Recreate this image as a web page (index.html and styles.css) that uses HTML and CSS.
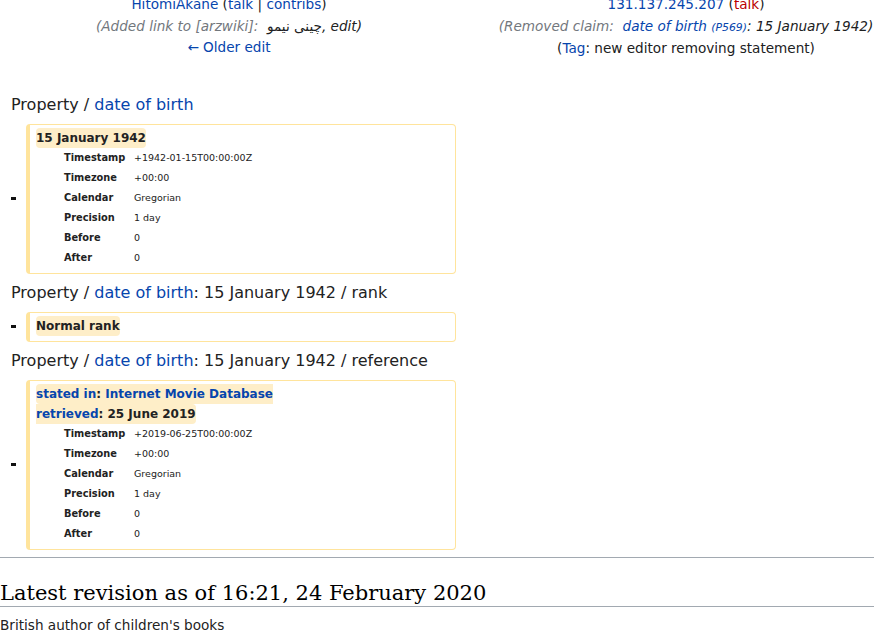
FILE: index.html
```html
<!DOCTYPE html>
<html lang="en">
<head>
<meta charset="utf-8">
<title>Diff</title>
<link rel="stylesheet" href="styles.css">
</head>
<body>
<div class="page">
  <div class="diff">
    <div class="diff-header">
      <div class="diff-title">
        <div class="hline"><a class="link" href="#">HitomiAkane</a> (<a class="link" href="#">talk</a> | <a class="link" href="#">contribs</a>)</div>
        <div class="hline comment"><span class="auto">(Added link to [arzwiki]:&nbsp; </span><span class="ar" dir="rtl">چینی نیمو</span>, edit)</div>
        <div class="hline"><a class="link" href="#">← Older edit</a></div>
      </div>
      <div class="diff-title">
        <div class="hline"><a class="link" href="#">131.137.245.207</a> (<a class="new" href="#">talk</a>)</div>
        <div class="hline comment"><span class="auto">(Removed claim:&nbsp; </span><a class="link" href="#">date of birth <span class="pid">(P569)</span></a>: 15 January 1942)</div>
        <div class="hline">(<a class="link" href="#">Tag</a>: new editor removing statement)</div>
      </div>
    </div>

    <div class="diff-body">
      <div class="lineno">Property / <a class="link" href="#">date of birth</a></div>
      <div class="marker"><span class="minus"></span></div>
      <div class="deleted">
        <span class="chg">15 January 1942</span>
        <table class="details">
          <tr><th>Timestamp</th><td>+1942-01-15T00:00:00Z</td></tr>
          <tr><th>Timezone</th><td>+00:00</td></tr>
          <tr><th>Calendar</th><td>Gregorian</td></tr>
          <tr><th>Precision</th><td>1 day</td></tr>
          <tr><th>Before</th><td>0</td></tr>
          <tr><th>After</th><td>0</td></tr>
        </table>
      </div>

      <div class="lineno">Property / <a class="link" href="#">date of birth</a>: 15 January 1942 / rank</div>
      <div class="marker"><span class="minus"></span></div>
      <div class="deleted">
        <span class="chg">Normal rank</span>
      </div>

      <div class="lineno">Property / <a class="link" href="#">date of birth</a>: 15 January 1942 / reference</div>
      <div class="marker"><span class="minus"></span></div>
      <div class="deleted">
        <span class="chg"><a class="link" href="#">stated in</a>: <a class="link" href="#">Internet Movie Database</a><br><a class="link" href="#">retrieved</a>: 25 June 2019</span>
        <table class="details">
          <tr><th>Timestamp</th><td>+2019-06-25T00:00:00Z</td></tr>
          <tr><th>Timezone</th><td>+00:00</td></tr>
          <tr><th>Calendar</th><td>Gregorian</td></tr>
          <tr><th>Precision</th><td>1 day</td></tr>
          <tr><th>Before</th><td>0</td></tr>
          <tr><th>After</th><td>0</td></tr>
        </table>
      </div>
    </div>
  </div>

  <hr class="rule">
  <h2 class="revision">Latest revision as of 16:21, 24 February 2020</h2>
  <p class="desc">British author of children's books</p>
</div>
</body>
</html>
```

FILE: styles.css
```css
html, body {
  margin: 0;
  padding: 0;
  background: #fff;
}

body {
  font-family: "DejaVu Sans", sans-serif;
  color: #202122;
  overflow: hidden;
}

.page {
  width: 874px;
  overflow: hidden;
}

a {
  text-decoration: none;
}

.link {
  color: #0645ad;
}

.new {
  color: #ba0000;
}

.diff {
  width: 914px;
}

.diff-header {
  display: grid;
  grid-template-columns: 458px 456px;
  margin-top: -6px;
}

.diff-title {
  text-align: center;
  font-size: 13.6px;
  line-height: 21.5px;
}

.comment {
  font-style: italic;
}

.comment .auto {
  color: #72777d;
}

.ar {
  font-style: normal;
}

.pid {
  font-size: 0.8em;
}

.diff-body {
  display: grid;
  grid-template-columns: 26px 430px;
  row-gap: 8px;
  margin-top: 34px;
}

.lineno {
  grid-column: 1 / -1;
  padding-left: 11px;
  font-size: 16px;
  line-height: 22px;
  color: #222;
}

.marker {
  display: flex;
  justify-content: center;
  align-items: center;
}

.minus {
  display: block;
  width: 5px;
  height: 3px;
  background: #111;
  margin-left: 1px;
}

.deleted {
  border: 1px solid #ffe49c;
  border-left-width: 4px;
  border-radius: 4px;
  padding: 3px 6px 5px 6px;
  font-size: 12px;
  line-height: 20px;
  color: #222;
}

.chg {
  background: #feeec8;
  font-weight: bold;
  padding: 3px 0;
  border-radius: 4px;
}

.details {
  border-collapse: collapse;
  margin-left: 28px;
}

.details th,
.details td {
  padding: 0;
  height: 20px;
  text-align: left;
  vertical-align: middle;
  line-height: 20px;
}

.details th {
  width: 70px;
  font-size: 9.8px;
  font-weight: bold;
}

.details td {
  font-size: 9.5px;
}

.rule {
  margin: 7px 0 0;
  border: 0;
  border-top: 1px solid #a2a9b1;
  height: 0;
}

.revision {
  margin: 23px 0 0;
  font-family: "DejaVu Serif", serif;
  font-weight: normal;
  font-size: 21px;
  line-height: 25px;
  border-bottom: 1px solid #a2a9b1;
  color: #000;
}

.desc {
  margin: 8px 0 0;
  font-size: 13.6px;
  line-height: 21.5px;
  color: #222;
}
```
